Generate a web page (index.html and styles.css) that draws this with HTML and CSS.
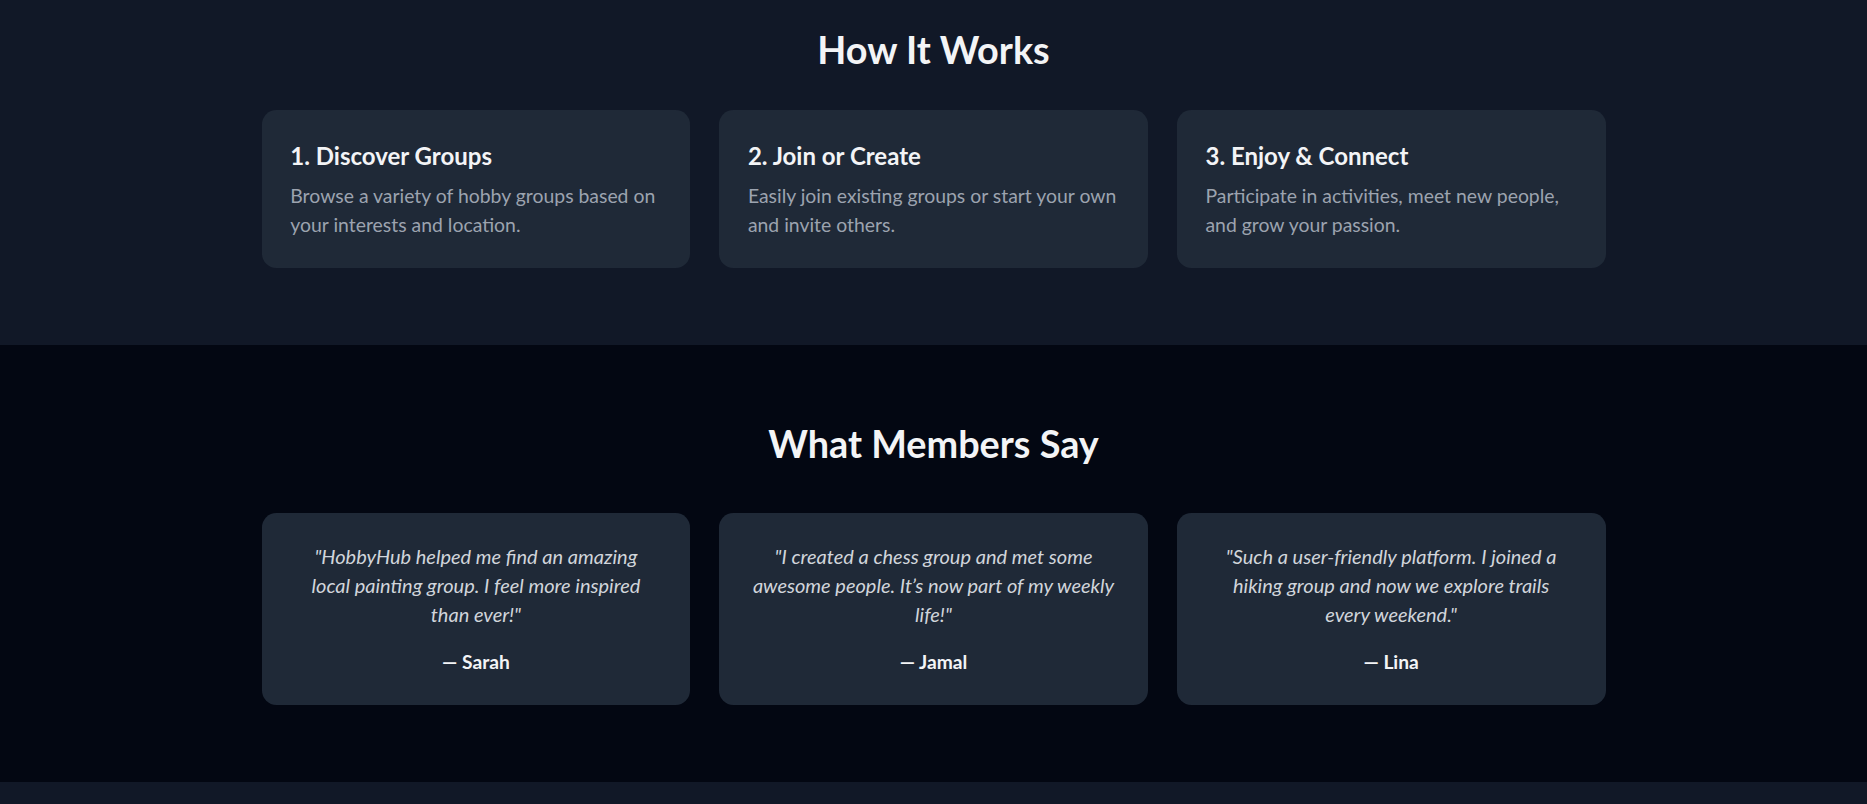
FILE: index.html
```html
<!DOCTYPE html>
<html lang="en">
<head>
<meta charset="utf-8">
<title>HobbyHub</title>
<link rel="stylesheet" href="styles.css">
</head>
<body>
<section class="how">
  <h2 class="section-title how-title">How It Works</h2>
  <div class="grid">
    <div class="card step">
      <h3 class="step-title">1. Discover Groups</h3>
      <p class="step-text">Browse a variety of hobby groups based on your interests and location.</p>
    </div>
    <div class="card step">
      <h3 class="step-title">2. Join or Create</h3>
      <p class="step-text">Easily join existing groups or start your own and invite others.</p>
    </div>
    <div class="card step">
      <h3 class="step-title">3. Enjoy &amp; Connect</h3>
      <p class="step-text">Participate in activities, meet new people, and grow your passion.</p>
    </div>
  </div>
</section>
<section class="say">
  <h2 class="section-title say-title">What Members Say</h2>
  <div class="grid">
    <div class="card quote">
      <p class="quote-text">"HobbyHub helped me find an amazing<br>local painting group. I feel more inspired<br>than ever!"</p>
      <p class="quote-author">— Sarah</p>
    </div>
    <div class="card quote">
      <p class="quote-text">"I created a chess group and met some<br>awesome people. It’s now part of my weekly<br>life!"</p>
      <p class="quote-author">— Jamal</p>
    </div>
    <div class="card quote">
      <p class="quote-text">"Such a user-friendly platform. I joined a<br>hiking group and now we explore trails<br>every weekend."</p>
      <p class="quote-author">— Lina</p>
    </div>
  </div>
</section>
<footer class="footer"></footer>
</body>
</html>
```

FILE: styles.css
```css
* { box-sizing: border-box; }

body {
  margin: 0;
  background: #111827;
  font-family: Lato, "Open Sans", sans-serif;
  color: #f3f4f6;
}

.how {
  background: #111827;
  padding: 28.4px 0 76.8px;
}

.say {
  background: #030712;
  padding: 76.8px 0;
}

.section-title {
  margin: 0;
  text-align: center;
  font-size: 37.8px;
  line-height: 43.2px;
  font-weight: 700;
  color: #f3f4f6;
}

.how-title { margin-bottom: 38.4px; }
.say-title { margin-bottom: 48px; }

.grid {
  max-width: 1344px;
  margin: 0 auto;
  display: grid;
  grid-template-columns: repeat(3, 1fr);
  gap: 28.8px;
}

.card {
  background: #1f2937;
  border-radius: 14.4px;
  padding: 28.8px;
}

.step-title {
  margin: 0 0 9.6px;
  font-size: 24px;
  line-height: 33.6px;
  font-weight: 700;
  color: #f3f4f6;
}

.step-text {
  margin: 0;
  font-size: 19.4px;
  line-height: 28.8px;
  color: #9ca3af;
}

.quote { text-align: center; }

.quote-text {
  margin: 0;
  font-size: 20px;
  line-height: 28.8px;
  font-style: italic;
  color: #d1d5db;
}

.quote-author {
  margin: 19.2px 0 0;
  font-size: 19.2px;
  line-height: 28.8px;
  font-weight: 700;
  color: #f3f4f6;
}

.footer {
  height: 120px;
  background: #111827;
}
```
